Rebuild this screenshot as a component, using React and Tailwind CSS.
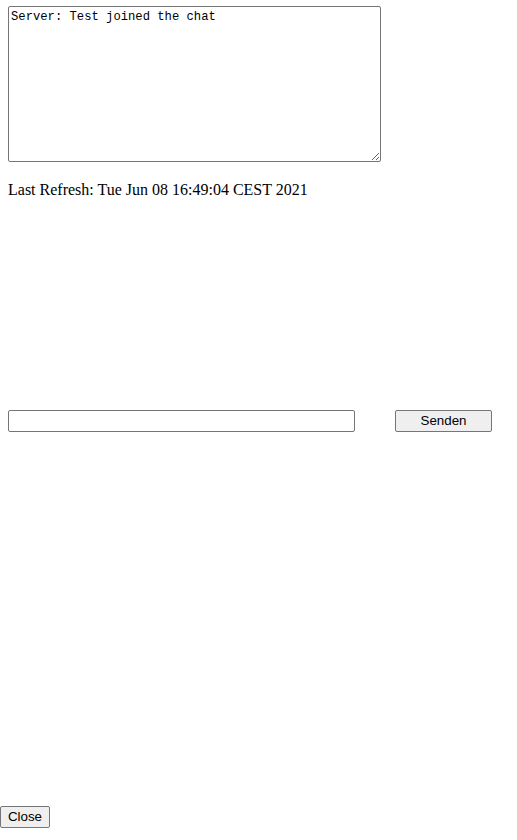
export default function App() {
  return (
    <div className="flex flex-col items-start bg-white min-h-[840px] font-['Liberation_Serif',serif]">
      <textarea
        readOnly
        defaultValue="Server: Test joined the chat"
        className="ml-[8px] mt-[6px] w-[373px] h-[156px] border border-[#767676] rounded-[2px] px-[2px] pt-[3px] pb-[2px] text-[12.2px] leading-[15px] text-black bg-white focus:outline-none resize font-['Liberation_Mono',monospace]"
      />

      <p className="ml-[8px] mt-[19px] text-[16px] leading-[18px] text-black">
        Last Refresh: Tue Jun 08 16:49:04 CEST 2021
      </p>

      <div className="flex items-center ml-[8px] mt-[211px] gap-[40px]">
        <input
          type="text"
          className="w-[347px] h-[22px] border border-[#767676] rounded-[2px] px-[2px] text-[13px] bg-white focus:outline-none"
        />
        <button className="w-[97px] h-[22px] border border-[#767676] rounded-[2px] bg-[#efefef] text-[13.33px] text-black font-['Liberation_Sans',Arial,sans-serif]">
          Senden
        </button>
      </div>

      <button className="mt-[374px] w-[50px] h-[22px] border border-[#767676] rounded-[2px] bg-[#efefef] text-[13.33px] text-black font-['Liberation_Sans',Arial,sans-serif]">
        Close
      </button>
    </div>
  )
}
